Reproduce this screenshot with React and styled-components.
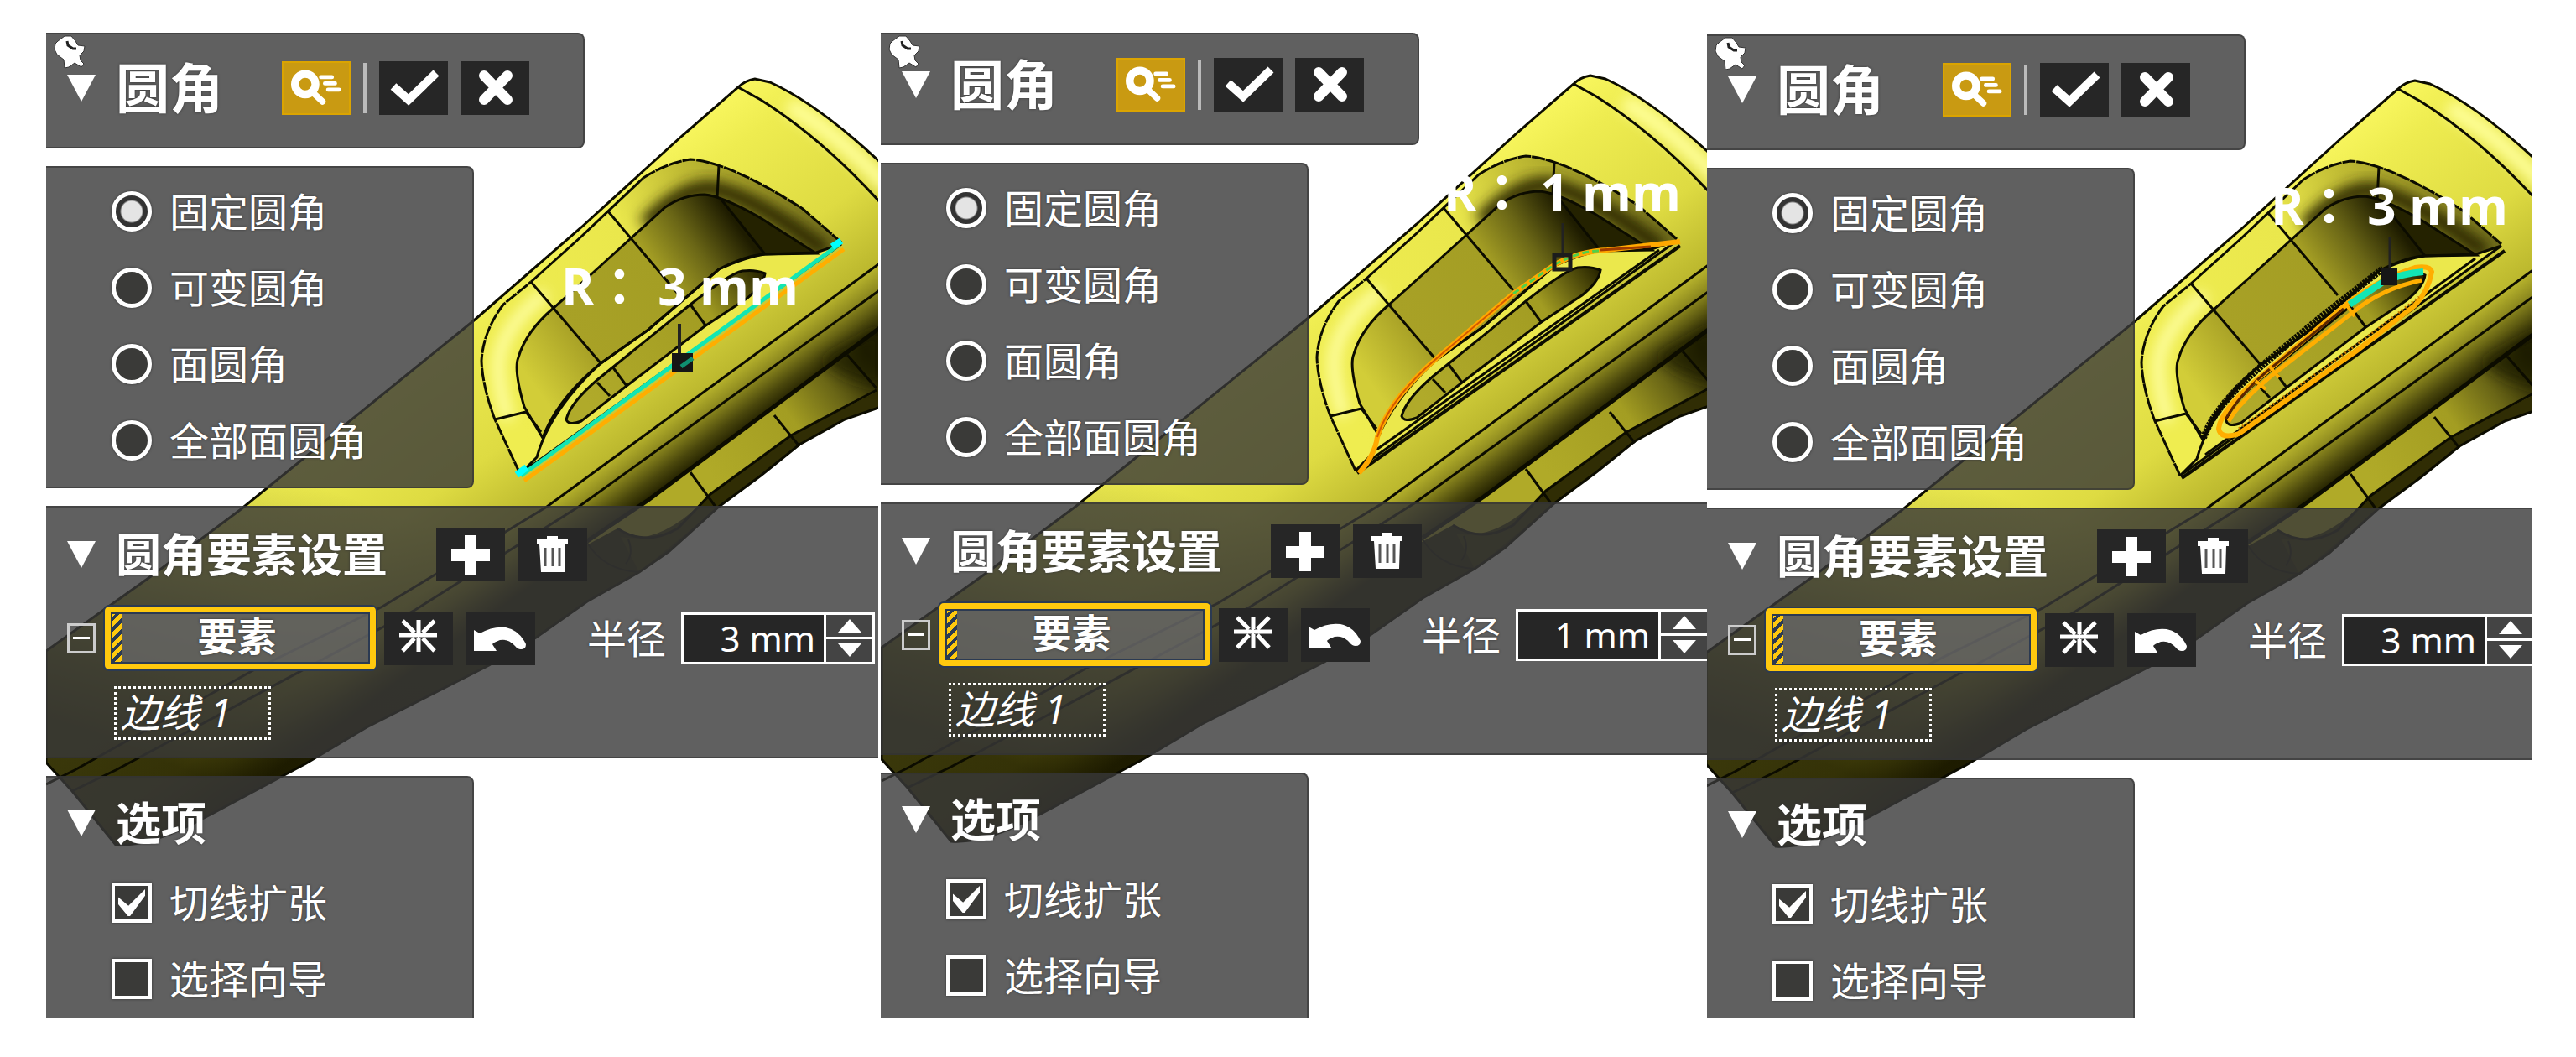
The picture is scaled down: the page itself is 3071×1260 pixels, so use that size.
import {useState} from 'react'
import styled, {createGlobalStyle} from 'styled-components'

const GlobalStyle = createGlobalStyle`
  body {
    margin: 0;
    background: #fff;
  }
  * {
    box-sizing: border-box;
  }
`;

const shots = [
  {id: 'a', radius: '3 mm', top: 39, header: 138, gap: 3, view: '55 39', edge: 'long', label: [614, 270]},
  {id: 'b', radius: '1 mm', top: 39, header: 134, gap: 0, view: '54 43', edge: 'curve', label: [671, 158]},
  {id: 'c', radius: '3 mm', top: 41, header: 138, gap: 0, view: '56 37', edge: 'slot', label: [672, 174]},
]

const filletTypes = ['固定圆角', '可变圆角', '面圆角', '全部面圆角']

export default function App() {
  return (
    <Page>
      <GlobalStyle />
      {shots.map((shot) => <Shot key={shot.id} shot={shot} />)}
    </Page>
  )
}

function Shot({shot}){
  return (
    <ShotWrap $top={shot.top} $gap={shot.gap}>
      <Scene>
        <Model shot={shot} />
        <RadiusLabel $left={shot.label[0]} $top={shot.label[1]}>R：&nbsp;{shot.radius}</RadiusLabel>
      </Scene>
      <HeaderPanel shot={shot} />
      <TypePanel id={shot.id} />
      <SettingsPanel shot={shot} />
      <OptionsPanel />
    </ShotWrap>
  )
}

function HeaderPanel({shot}){
  return (
    <Header $height={shot.header}>
      <Pin viewBox="0 0 40 42">
        <path d="M6 8 L14 2 L22 2 L27 8 L30 13 L38 14 L37 20 L32 25 L33 31 L37 35 L34 39 L26 34 L19 39 L14 40 L13 30 L5 24 L2 18 L3 11 Z" fill="#fff" stroke="#333" strokeWidth="1" />
        <path d="M17 8 L18 13 L24 17 L28 17" fill="none" stroke="#222" strokeWidth="3" />
      </Pin>
      <Triangle />
      <Title>圆角</Title>
      <HeaderTools>
        <ToolButton $gold aria-label="预览"><PreviewIcon /></ToolButton>
        <Separator />
        <ToolButton aria-label="确定"><CheckIcon /></ToolButton>
        <ToolButton aria-label="取消"><CrossIcon /></ToolButton>
      </HeaderTools>
    </Header>
  )
}

function TypePanel({id}){
  const [type, setType] = useState(filletTypes[0])

  return (
    <NarrowPanel>
      {filletTypes.map((name) => (
        <Choice key={name}>
          <Radio name={`type-${id}`} checked={type === name} onChange={() => setType(name)} />
          {name}
        </Choice>
      ))}
    </NarrowPanel>
  )
}

function SettingsPanel({shot}){
  const [radius, setRadius] = useState(shot.radius)

  return (
    <WidePanel>
      <SettingsRow $height={62}>
        <Triangle />
        <SubTitle $wide>圆角要素设置</SubTitle>
        <ToolButton aria-label="添加"><PlusIcon /></ToolButton>
        <ToolButton aria-label="删除"><TrashIcon /></ToolButton>
      </SettingsRow>
      <SettingsRow $height={75}>
        <Collapse aria-label="折叠" />
        <Picker>要素</Picker>
        <ToolButton aria-label="相交"><BurstIcon /></ToolButton>
        <ToolButton aria-label="撤销"><UndoIcon /></ToolButton>
        <FieldLabel htmlFor={`radius-${shot.id}`}>半径</FieldLabel>
        <Spin>
          <SpinInput id={`radius-${shot.id}`} value={radius} onChange={(e) => setRadius(e.target.value)} />
          <Stepper>
            <StepButton aria-label="增大"><svg width="28" height="16" viewBox="0 0 28 16"><path d="M14 0 L28 16 H0 Z" fill="#fff" /></svg></StepButton>
            <StepButton aria-label="减小"><svg width="28" height="16" viewBox="0 0 28 16"><path d="M0 0 H28 L14 16 Z" fill="#fff" /></svg></StepButton>
          </Stepper>
        </Spin>
      </SettingsRow>
      <EdgeItem>边线 1</EdgeItem>
    </WidePanel>
  )
}

function OptionsPanel(){
  const [expand, setExpand] = useState(true)
  const [guide, setGuide] = useState(false)

  return (
    <LastPanel>
      <OptionsHead>
        <Triangle />
        <SubTitle>选项</SubTitle>
      </OptionsHead>
      <Choice>
        <Checkbox checked={expand} onChange={(e) => setExpand(e.target.checked)} />
        切线扩张
      </Choice>
      <Choice>
        <Checkbox checked={guide} onChange={(e) => setGuide(e.target.checked)} />
        选择向导
      </Choice>
    </LastPanel>
  )
}


// ---------- icons ----------

function PreviewIcon(){
  return (
    <Icon viewBox="0 0 82 64" fill="none" stroke="#fff" strokeLinecap="round">
      <ellipse cx="27" cy="27" rx="13" ry="13" strokeWidth="10" />
      <path d="M38 39 L49 49" strokeWidth="8" />
      <path d="M47 18 H61 M52 26 H65 M56 34 H70" strokeWidth="5" />
    </Icon>
  )
}

function CheckIcon(){
  return (
    <Icon viewBox="0 0 82 64" fill="none" stroke="#fff" strokeWidth="10">
      <path d="M17 30 L35 46 L68 14" />
    </Icon>
  )
}

function CrossIcon(){
  return (
    <Icon viewBox="0 0 82 64" fill="none" stroke="#fff" strokeWidth="12" strokeLinecap="round">
      <path d="M28 17 L56 46 M56 17 L28 46" />
    </Icon>
  )
}

function PlusIcon(){
  return (
    <Icon viewBox="0 0 82 64" fill="none" stroke="#fff" strokeWidth="14">
      <path d="M18 33 H64 M41 9 V56" />
    </Icon>
  )
}

function TrashIcon(){
  return (
    <Icon viewBox="0 0 82 64">
      <path d="M34 10 H47 V14 H59 V20 H56 L55 53 H27 L25 20 H22 V14 H34 Z" fill="#fff" />
      <path d="M32 24 V46 M41 24 V46 M49 24 V46" stroke="#555" strokeWidth="3" />
    </Icon>
  )
}

function BurstIcon(){
  return (
    <Icon viewBox="0 0 82 64" fill="none" stroke="#fff" strokeWidth="5">
      <path d="M18 28 H63 M41 10 V25 M41 31 V48 M22 11 L36 25 M60 11 L46 25 M22 47 L36 32 M60 47 L46 32" />
      <path d="M41 22 V34" strokeWidth="2" />
    </Icon>
  )
}

function UndoIcon(){
  return (
    <Icon viewBox="0 0 82 64">
      <path d="M9 22 L16 26 Q32 17 47 19 Q63 22 71 39 Q71 45 65 45 Q61 45 58 41 Q50 32 40 34 Q32 37 31 39 L36 47 L9 47 Z" fill="#fff" />
    </Icon>
  )
}


// ---------- the part in the viewport ----------

const BODY = 'M55 776 L180 687 L286 608 L565 382 L693 271 L813 162 L880 104 Q888 96 900 94 L918 98 Q975 124 1050 194 L1050 485 L1007 500 L953 530 L907 567 L857 604 L798 657 L762 682 L700 717 L639 760 L583 793 L437 867 L365 910 L247 973 Q180 1010 138 1007 L86 943 L55 909 Z'
const RECESS = 'M620 565 L590 500 Q575 460 574 430 Q576 395 600 363 L633 336 L767 212 Q795 194 823 190 Q870 193 957 249 L1003 289 Z'
const INNER = 'M647 522 L625 485 Q612 440 618 426 Q627 395 660 367 L707 325 L793 247 Q815 232 840 232 Q862 234 907 260 L973 302 L912 303 Q890 306 857 321 L773 393 L715 434 Q664 476 647 522 Z'
const LEDGE = 'M620 565 L640 545 Q655 490 715 434 L773 393 L857 321 Q890 304 912 303 L973 301 L1003 291 Z'
const SLOT = 'M675 500 Q680 480 713 452 L823 363 Q870 326 885 323 Q900 321 912 326 Q910 340 890 356 L840 389 L747 460 L693 502 Q678 508 675 500 Z'

function Model({shot}){
  const id = (name) => `${name}-${shot.id}`
  const url = (name) => `url(#${name}-${shot.id})`

  return (
    <svg width="1000" height="1200" viewBox={`${shot.view} 1000 1200`}>
      <defs>
        <linearGradient id={id('body')} gradientUnits="userSpaceOnUse" x1="354" y1="486" x2="566" y2="778">
          <stop offset="0" stopColor="#f8f65e" />
          <stop offset="0.15" stopColor="#eeec50" />
          <stop offset="0.5" stopColor="#dedb42" />
          <stop offset="0.74" stopColor="#bcb82e" />
          <stop offset="0.82" stopColor="#85811c" />
          <stop offset="0.88" stopColor="#4a470c" />
          <stop offset="0.93" stopColor="#222000" />
        </linearGradient>
        <linearGradient id={id('tail')} gradientUnits="userSpaceOnUse" x1="330" y1="560" x2="200" y2="910">
          <stop offset="0" stopColor="#1c1a00" stopOpacity="0" />
          <stop offset="0.4" stopColor="#1c1a00" stopOpacity="0.25" />
          <stop offset="0.8" stopColor="#1c1a00" stopOpacity="0.7" />
          <stop offset="1" stopColor="#1c1a00" stopOpacity="0.85" />
        </linearGradient>
        <linearGradient id={id('roll')} gradientUnits="userSpaceOnUse" x1="590" y1="430" x2="1000" y2="270">
          <stop offset="0" stopColor="#efed50" />
          <stop offset="0.45" stopColor="#eae74c" />
          <stop offset="0.65" stopColor="#c2bd34" />
          <stop offset="0.8" stopColor="#a5a028" />
          <stop offset="1" stopColor="#6d691a" />
        </linearGradient>
        <linearGradient id={id('inner')} gradientUnits="userSpaceOnUse" x1="630" y1="450" x2="880" y2="270">
          <stop offset="0" stopColor="#d2cd38" />
          <stop offset="0.25" stopColor="#a8a126" />
          <stop offset="0.65" stopColor="#a49e24" />
          <stop offset="0.82" stopColor="#6a6616" />
          <stop offset="1" stopColor="#1e1c00" />
        </linearGradient>
        <linearGradient id={id('slot')} gradientUnits="userSpaceOnUse" x1="700" y1="480" x2="910" y2="330">
          <stop offset="0" stopColor="#b0aa2a" />
          <stop offset="0.7" stopColor="#a29c22" />
          <stop offset="1" stopColor="#2a2700" />
        </linearGradient>
        <linearGradient id={id('grip')} gradientUnits="userSpaceOnUse" x1="850" y1="570" x2="1040" y2="430">
          <stop offset="0" stopColor="#b0aa28" />
          <stop offset="0.5" stopColor="#a39d22" />
          <stop offset="0.75" stopColor="#6a6616" />
          <stop offset="1" stopColor="#1e1c00" />
        </linearGradient>
        <filter id={id('soft')} x="-30%" y="-30%" width="160%" height="160%">
          <feGaussianBlur stdDeviation="8" />
        </filter>
        <clipPath id={id('clipBody')}><path d={BODY} /></clipPath>
        <clipPath id={id('clipRecess')}><path d={RECESS} /></clipPath>
      </defs>

      <path d={BODY} fill={url('body')} />
      <path d={BODY} fill={url('tail')} />
      <g clipPath={url('clipBody')}>
        <path d="M940 125 Q1000 160 1060 225" fill="none" stroke="#ffff9a" strokeWidth="20" filter={url('soft')} />
        {/* grip under the body */}
        <path d="M690 655 L775 596 L1050 391 L1050 465 L943 519 L847 589 L808 630 Q770 650 736 630 Z" fill={url('grip')} />
        <path d="M847 589 L943 519 L1050 465 L1050 490 L857 604 L762 682 L740 640 Q790 650 847 589 Z" fill="#302d04" />
        <path d="M980 430 L1050 391 L1050 460 Q1010 455 980 430 Z" fill="#1e1c00" opacity="0.7" filter={url('soft')} />
      </g>

      {/* recess */}
      <path d={RECESS} fill={url('roll')} />
      <g clipPath={url('clipRecess')}>
        <path d="M650 350 Q592 395 594 440 Q596 470 606 500" fill="none" stroke="#ffffa8" strokeWidth="14" filter={url('soft')} />
        <path d="M770 268 Q815 222 850 225 Q900 235 985 300" fill="none" stroke="#2a2700" strokeWidth="20" filter={url('soft')} />
      </g>
      <path d={INNER} fill={url('inner')} />
      <path d="M860 238 L907 260 L973 301 L912 303 Z" fill="#242200" />
      <path d={LEDGE} fill="#ebe84c" />
      <path d={SLOT} fill={url('slot')} />

      <g fill="none" stroke="#0c0c00" strokeWidth="3">
        <path d={BODY} />
        <path d="M880 104 L907 119 Q980 165 1050 242" />
        <path d="M633 336 L693 282 L767 212" />
        <path d="M620 565 L590 500 Q575 460 574 430 Q576 395 600 363 L633 336" strokeDasharray="16 1" />
        <path d="M767 212 Q795 194 823 190 Q870 193 957 249 L1003 289" strokeDasharray="16 1" />
        <path d={INNER} />
        <path d={LEDGE} />
        <path d={SLOT} />
        <path d="M633 336 L717 434 M730 437 L747 460 M725 252 L808 350 M823 363 L842 389 M857 197 L855 236 M860 238 L912 303 M590 500 L627 491 M712 456 L727 472 M627 491 L645 515" />
        <path d="M1050 313 L652 604 L456 723 L300 800 L89 918 L55 935" />
        <path d="M1050 345 L690 604 L495 727 L138 918 L86 943" />
        <path d="M1050 390 L773 596 L700 645" strokeWidth="5" />
        <path d="M1045 465 L943 519 L847 589 L808 630 Q770 652 736 630" />
        <path d="M923 495 L953 532 M823 563 L853 604 M1010 423 L1045 463" />
        <path d="M749 643 Q756 660 746 672 M700 647 Q720 680 762 682" strokeWidth="2" />
      </g>

      {shot.edge === 'long' && <LongEdge />}
      {shot.edge === 'curve' && <CurveEdge />}
      {shot.edge === 'slot' && <SlotEdge />}
    </svg>
  )
}

function LongEdge(){
  return (
    <g fill="none">
      <path d="M625 573 L1006 297" stroke="#ffae00" strokeWidth="5" />
      <path d="M621 567 L1001 291" stroke="#12e6b4" strokeWidth="5" />
      <path d="M616 566 L628 557 M992 294 L1003 287" stroke="#0ff" strokeWidth="8" />
      <path d="M810 386 V424" stroke="#222" strokeWidth="4" />
      <rect x="801" y="421" width="25" height="23" fill="#161616" />
      <path d="M812 437 L826 427" stroke="#0f8f70" strokeWidth="5" />
    </g>
  )
}

function CurveEdge(){
  return (
    <g fill="none">
      <path d="M622 568 L1007 297" stroke="#0c0c00" strokeWidth="4" />
      <path d="M645 540 L982 302" stroke="#0c0c00" strokeWidth="3" />
      <path d="M624 568 Q643 547 646 525 Q660 480 718 430 L808 354 L858 319 Q888 303 920 302 L1007 292" stroke="#ffa800" strokeWidth="6" />
      <path d="M646 525 Q660 480 718 430 L808 354" stroke="#d45a00" strokeWidth="2" />
      <path d="M912 302 L972 298" stroke="#a03c00" strokeWidth="3" />
      <path d="M808 354 L858 319 Q888 303 910 303" stroke="#4fd04a" strokeWidth="3" strokeDasharray="8 4" />
      <path d="M867 270 V308" stroke="#222" strokeWidth="3" />
      <rect x="857" y="308" width="19" height="17" fill="none" stroke="#1c1c1c" strokeWidth="5" />
    </g>
  )
}

function SlotEdge(){
  return (
    <g fill="none">
      <path d="M622 568 L1007 297" stroke="#0c0c00" strokeWidth="4" />
      <path d="M650 540 L972 306" stroke="#0c0c00" strokeWidth="3" />
      <path d="M648 520 Q662 480 720 432 L790 374 L862 318" stroke="#0c0c00" strokeWidth="8" strokeDasharray="3 1" />
      <path d="M666 509 Q668 488 710 452 L818 361 Q850 334 900 317 Q918 314 920 322 Q916 345 900 362 L832 415 L690 515 Q668 522 666 509 Z" stroke="#ffae00" strokeWidth="6" />
      <path d="M678 500 Q690 478 730 445 L825 371 Q860 342 908 332" stroke="#ffae00" strokeWidth="5" />
      <path d="M674 498 Q690 470 722 442 L815 366" stroke="#5c2600" strokeWidth="3" />
      <path d="M710 452 L722 462 M726 434 L738 448 M818 361 L828 375" stroke="#ffae00" strokeWidth="4" />
      <path d="M690 509 L836 405 L905 352" stroke="#c87a00" strokeWidth="3" strokeDasharray="2 3" />
      <path d="M822 361 L862 334 Q884 324 910 322" stroke="#12e6b4" strokeWidth="8" />
      <path d="M870 280 V320" stroke="#222" strokeWidth="3" />
      <rect x="859" y="318" width="20" height="20" fill="#161616" />
    </g>
  )
}


// ---------- styles ----------

const Page = styled.div`
  display: grid;
  grid-template-columns: 995fr 985fr 983fr;
  min-height: 100vh;
  padding: 0 53px 0 55px;
  background: #fff;
  color: #fff;
  font-family: "Noto Sans", "Noto Sans CJK SC", sans-serif;
  font-size: 47px;
  line-height: 60px;
`;

const ShotWrap = styled.div`
  position: relative;
  display: flex;
  flex-direction: column;
  align-items: flex-start;
  gap: 21px;
  padding: ${props => props.$top}px 0 47px;
  margin-right: ${props => props.$gap}px;
  overflow: hidden;
`;

const Scene = styled.div`
  position: absolute;
  top: 39px;
  bottom: 47px;
  left: 0;
  right: 0;
  overflow: hidden;
`;

const RadiusLabel = styled.span`
  position: absolute;
  left: ${props => props.$left}px;
  top: ${props => props.$top}px;
  font-family: "Open Sans", "Noto Sans CJK TC", sans-serif;
  font-size: 60px;
  font-weight: 700;
  line-height: 64px;
  white-space: nowrap;
`;

const Panel = styled.section`
  position: relative;
  width: 510px;
  background: rgba(56, 56, 56, 0.8);
  border: 2px solid rgba(50, 50, 50, 0.6);
  border-left: none;
  border-radius: 0 8px 8px 0;
  text-shadow: 0 0 3px #333;
`;

const Header = styled(Panel)`
  display: flex;
  align-items: center;
  gap: 24px;
  width: 642px;
  height: ${props => props.$height}px;
  padding: ${props => props.$height - 107}px 64px 38px 25px;
`;

const NarrowPanel = styled(Panel)`
  padding: 22px 0 25px 78px;
`;

const WidePanel = styled(Panel)`
  width: 100%;
  height: 301px;
  border-right: none;
  border-radius: 0;
  padding: 25px 0 0 25px;
`;

const LastPanel = styled(Panel)`
  flex: 1;
  border-bottom: none;
  border-radius: 0 8px 0 0;
  padding: 24px 0 0 78px;
`;

const Pin = styled.svg`
  position: absolute;
  left: 8px;
  top: 0;
  width: 40px;
  height: 42px;
`;

const Triangle = styled.span`
  flex: none;
  align-self: center;
  border: 17px solid transparent;
  border-top: 32px solid #fff;
  border-bottom: none;
`;

const Title = styled.h1`
  margin: 0;
  font-size: 64px;
  line-height: 64px;
  font-weight: 700;
`;

const SubTitle = styled.h2`
  margin: 0;
  flex: none;
  width: ${props => props.$wide ? '366px' : 'auto'};
  font-size: 54px;
  line-height: 60px;
  font-weight: 700;
`;

const HeaderTools = styled.div`
  display: flex;
  align-items: center;
  gap: 15px;
  margin-left: auto;
`;

const Separator = styled.span`
  width: 4px;
  height: 60px;
  background: #bbb;
`;

const ToolButton = styled.button`
  flex: none;
  width: 82px;
  height: 64px;
  padding: 0;
  border: ${props => props.$gold ? '2px solid #dba400' : 'none'};
  background: ${props => props.$gold ? '#c99a12' : '#262626'};
`;

const Icon = styled.svg`
  display: block;
  width: 100%;
  height: 100%;
`;

const Choice = styled.label`
  display: flex;
  align-items: center;
  gap: 21px;
  height: 60px;

  & + & {
    margin-top: 31px;
  }
`;

const Radio = styled.input.attrs({type: 'radio'})`
  appearance: none;
  width: 48px;
  height: 48px;
  margin: 0;
  border: 5px solid #fff;
  border-radius: 50%;
  background: #3a3a38;
  box-shadow: 0 0 3px #333;

  &:checked {
    background: radial-gradient(circle, #e4e4e4 12px, #333 14px);
  }
`;

const Checkbox = styled.input.attrs({type: 'checkbox'})`
  appearance: none;
  position: relative;
  width: 48px;
  height: 48px;
  margin: 0;
  border: 4px solid #fff;
  background: #3a3a38;
  box-shadow: 0 0 3px #333;

  &:checked::after {
    content: '';
    position: absolute;
    inset: 4px;
    background: #fff;
    clip-path: polygon(0 30%, 38% 62%, 100% 0, 100% 24%, 44% 100%, 36% 100%, 0 56%);
  }
`;

const SettingsRow = styled.div`
  display: flex;
  align-items: center;
  height: ${props => props.$height}px;
  margin-bottom: ${props => props.$height === 62 ? 31 : 20}px;

  ${Triangle} {
    margin-right: 24px;
  }
  ${ToolButton} {
    margin-left: 16px;
  }
`;

const Collapse = styled.button`
  flex: none;
  width: 34px;
  height: 36px;
  margin-right: 11px;
  padding: 0;
  border: 3px solid #ccc;
  background: linear-gradient(#fff, #fff) center / 20px 3px no-repeat;
`;

const Picker = styled.button`
  flex: none;
  width: 323px;
  height: 75px;
  padding: 0 8px 6px 0;
  border: 7px solid #ffc90e;
  border-radius: 5px;
  background:
    repeating-linear-gradient(135deg, #ffc90e 0 5px, #2b3a52 5px 9px) left / 14px 100% no-repeat,
    rgba(105, 105, 105, 0.75);
  box-shadow: 0 0 0 2px #2b3a52, inset 0 0 0 2px #2b3a52;
  color: #fff;
  font-family: inherit;
  font-size: 47px;
  font-weight: 700;
  line-height: 54px;
  text-shadow: inherit;

  & + ${ToolButton} {
    margin-left: 10px;
  }
`;

const FieldLabel = styled.label`
  flex: none;
  margin: 0 18px 0 62px;
`;

const Spin = styled.div`
  flex: none;
  display: flex;
  width: 231px;
  height: 62px;
  border: 3px solid #fff;
`;

const SpinInput = styled.input`
  flex: 1;
  min-width: 0;
  padding: 0 10px;
  border: none;
  background: #262626;
  color: #fff;
  font-family: inherit;
  font-size: 42px;
  text-align: right;
`;

const Stepper = styled.div`
  display: flex;
  flex-direction: column;
  width: 58px;
  border-left: 3px solid #fff;
`;

const StepButton = styled.button`
  flex: 1;
  display: flex;
  align-items: center;
  justify-content: center;
  padding: 0;
  border: none;
  background: #444;

  & + & {
    border-top: 3px solid #fff;
  }
`;

const EdgeItem = styled.div`
  width: 187px;
  height: 64px;
  margin-left: 56px;
  padding-left: 5px;
  border: 3px dotted #fff;
  line-height: 56px;
  font-style: italic;
`;

const OptionsHead = styled.div`
  display: flex;
  align-items: center;
  gap: 24px;
  height: 60px;
  margin: 0 0 35px -53px;
`;
